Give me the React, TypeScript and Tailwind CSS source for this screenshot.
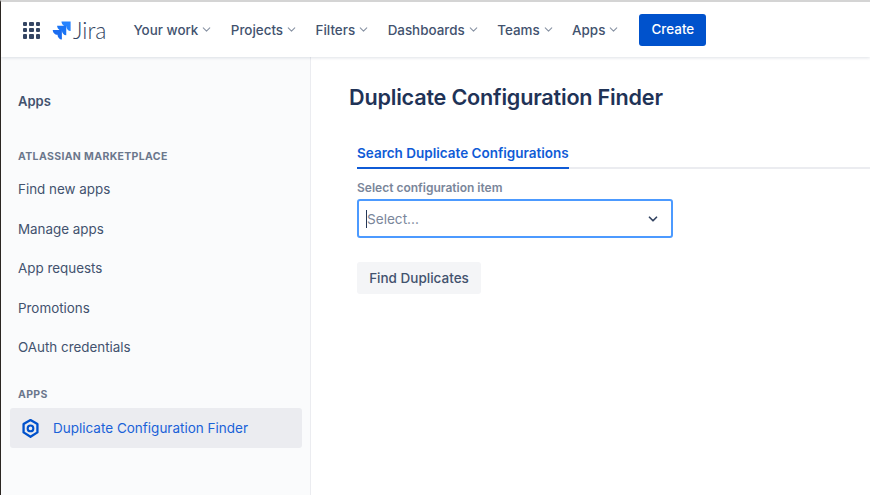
import { ChevronDown } from "lucide-react";

const NAV_ITEMS = ["Your work", "Projects", "Filters", "Dashboards", "Teams", "Apps"];
const MARKETPLACE_LINKS = ["Find new apps", "Manage apps", "App requests", "Promotions", "OAuth credentials"];

function AppGrid() {
  return (
    <div className="grid grid-cols-3 gap-[2px] w-[17px] h-[17px]">
      {Array.from({ length: 9 }).map((_, i) => (
        <span key={i} className="rounded-[1px] bg-[#344563]" />
      ))}
    </div>
  );
}

function JiraMark() {
  return (
    <svg width="19" height="19" viewBox="0 0 20 20">
      <path d="M19.6 .6H10c0 2.8 2.2 5 5 5 0 2.8 2 5 4.600 5z" fill="#2684ff" />
      <path d="M15 5H5.400c0 2.800 2.200 5 5 5 0 2.800 2 5 4.600 5z" fill="#1b75f5" />
      <path d="M10.400 9.400H.8c0 2.800 2.200 5 5 5 0 2.800 2 5 4.600 5z" fill="#1a6cf0" />
    </svg>
  );
}

function HexIcon() {
  return (
    <svg width="19" height="21" viewBox="0 0 18 20" fill="none">
      <path d="M9 2l6.600 3.800v7.900L9 17.900l-6.600-4.200V5.800z" stroke="#0052cc" strokeWidth="2.200" strokeLinejoin="round" />
      <circle cx="9" cy="9.900" r="2.700" stroke="#0052cc" strokeWidth="2" />
    </svg>
  );
}

export default function App() {
  return (
    <div className="w-[870px] h-[495px] overflow-hidden flex flex-col bg-white font-['Inter',sans-serif] border-t-2 border-t-[#d4d4d4] border-l border-l-[#2b2622]">
      <header className="relative z-10 h-[55px] shrink-0 flex items-center bg-white pl-[22px] pt-[1px] shadow-[0_1px_3px_rgba(9,30,66,0.13)]">
        <AppGrid />
        <div className="ml-[12px] flex items-center">
          <JiraMark />
          <span className="ml-[2px] font-['Lato',sans-serif] font-light text-[23px] leading-none text-[#344563]">Jira</span>
        </div>
        <nav className="ml-[27px] flex items-center gap-[17.500px]">
          {NAV_ITEMS.map((item) => (
            <div key={item} className="flex items-center text-[13.400px] font-medium text-[#42526e]">
              {item}
              <ChevronDown size={13} strokeWidth={2} className="ml-[2px] text-[#8993a4]" />
            </div>
          ))}
        </nav>
        <button className="ml-[19px] -mt-[1px] h-[32px] w-[67px] rounded-[3px] bg-[#0052cc] text-[13.400px] font-medium text-white">
          Create
        </button>
      </header>

      <div className="flex flex-1 min-h-0">
        <aside className="w-[310px] shrink-0 bg-[#fafbfc] border-r border-[#ebecf0] pl-[17px]">
          <h2 className="mt-[36px] text-[13px] font-semibold leading-4 text-[#42526e]">Apps</h2>
          <h3 className="mt-[40px] text-[10.500px] font-bold leading-4 tracking-[0.350px] text-[#6b778c]">
            ATLASSIAN MARKETPLACE
          </h3>
          <ul className="mt-[4.500px]">
            {MARKETPLACE_LINKS.map((link) => (
              <li key={link} className="h-[39.500px] flex items-center text-[13.400px] text-[#42526e]">
                {link}
              </li>
            ))}
          </ul>
          <h3 className="mt-[19.500px] text-[10.500px] font-bold leading-4 tracking-[0.350px] text-[#6b778c]">APPS</h3>
          <div className="mt-[5px] -ml-[8px] w-[292px] h-[40px] flex items-center rounded-[3px] bg-[#ebecf0] pl-[11px] pt-[1px]">
            <HexIcon />
            <span className="ml-[13px] text-[13.500px] text-[#1a62d8]">Duplicate Configuration Finder</span>
          </div>
        </aside>

        <main className="flex-1 pl-[38px]">
          <h1 className="mt-[26px] text-[21.600px] font-semibold leading-7 tracking-[-0.200px] text-[#1f3357]">
            Duplicate Configuration Finder
          </h1>
          <div className="mt-[28px] ml-[8px] border-b-2 border-[#ebecf0]">
            <span className="inline-block -mb-[2px] h-[30px] border-b-2 border-[#0f5bd6] text-[13.500px] font-semibold leading-[28px] text-[#0f5bd6]">
              Search Duplicate Configurations
            </span>
          </div>
          <div className="ml-[8px]">
            <label className="block mt-[11px] text-[12px] font-semibold leading-4 text-[#7a869a]">
              Select configuration item
            </label>
            <div className="mt-[3px] w-[316px] h-[39px] flex items-center justify-between rounded-[3px] border-2 border-[#4c9aff] bg-white pl-[7px] pr-[11px]">
              <span className="border-l border-[#253858] text-[13.600px] leading-[18px] text-[#7a869a]">Select...</span>
              <ChevronDown size={14} strokeWidth={3} className="text-[#344563]" />
            </div>
            <button className="mt-[24px] h-[32px] w-[124px] rounded-[3px] bg-[#f4f5f7] text-[13.500px] font-medium text-[#42526e]">
              Find Duplicates
            </button>
          </div>
        </main>
      </div>
    </div>
  );
}
